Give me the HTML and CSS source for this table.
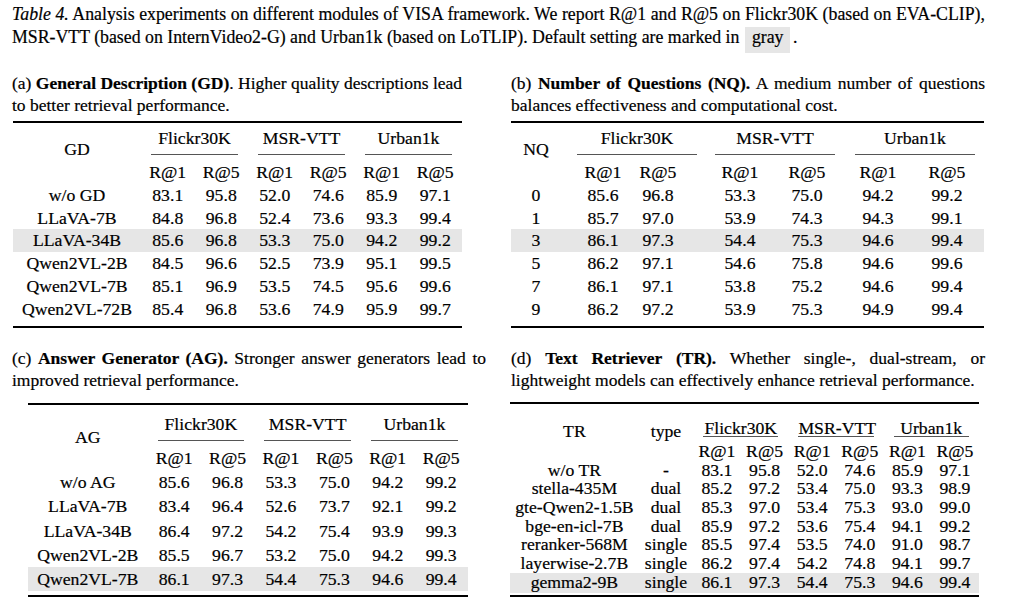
FILE: index.html
```html
<!DOCTYPE html>
<html lang="en">
<head>
<meta charset="utf-8">
<title>Table 4</title>
<link rel="stylesheet" href="styles.css">
</head>
<body>
<div class="page">
  <p class="caption">
    <span class="line just"><i>Table 4.</i> Analysis experiments on different modules of VISA framework. We report R@1 and R@5 on Flickr30K (based on EVA-CLIP),</span>
    <span class="line">MSR-VTT (based on InternVideo2-G) and Urban1k (based on LoTLIP). Default setting are marked in <span class="hl">gray</span>.</span>
  </p>

  <div class="figs">
    <section class="sub">
      <p class="subcap"><span class="line">(a) <b>General Description (GD)</b>. Higher quality descriptions lead</span><span class="line">to better retrieval performance.</span></p>
      <div class="tbl tbl-a">
        <div class="thead">
          <div class="lab">GD</div>
          <div class="grp"><span>Flickr30K</span></div>
          <div class="grp"><span>MSR-VTT</span></div>
          <div class="grp"><span>Urban1k</span></div>
          <div class="rh">R@1</div><div class="rh">R@5</div><div class="rh">R@1</div><div class="rh">R@5</div><div class="rh">R@1</div><div class="rh">R@5</div>
        </div>
        <div class="tr"><div>w/o GD</div><div>83.1</div><div>95.8</div><div>52.0</div><div>74.6</div><div>85.9</div><div>97.1</div></div>
        <div class="tr"><div>LLaVA-7B</div><div>84.8</div><div>96.8</div><div>52.4</div><div>73.6</div><div>93.3</div><div>99.4</div></div>
        <div class="tr def"><div>LLaVA-34B</div><div>85.6</div><div>96.8</div><div>53.3</div><div>75.0</div><div>94.2</div><div>99.2</div></div>
        <div class="tr"><div>Qwen2VL-2B</div><div>84.5</div><div>96.6</div><div>52.5</div><div>73.9</div><div>95.1</div><div>99.5</div></div>
        <div class="tr"><div>Qwen2VL-7B</div><div>85.1</div><div>96.9</div><div>53.5</div><div>74.5</div><div>95.6</div><div>99.6</div></div>
        <div class="tr"><div>Qwen2VL-72B</div><div>85.4</div><div>96.8</div><div>53.6</div><div>74.9</div><div>95.9</div><div>99.7</div></div>
      </div>
    </section>

    <section class="sub">
      <p class="subcap"><span class="line just">(b) <b>Number of Questions (NQ).</b> A medium number of questions</span><span class="line">balances effectiveness and computational cost.</span></p>
      <div class="tbl tbl-b">
        <div class="thead">
          <div class="lab">NQ</div>
          <div class="grp"><span>Flickr30K</span></div>
          <div class="grp"><span>MSR-VTT</span></div>
          <div class="grp"><span>Urban1k</span></div>
          <div class="rh">R@1</div><div class="rh">R@5</div><div class="rh">R@1</div><div class="rh">R@5</div><div class="rh">R@1</div><div class="rh">R@5</div>
        </div>
        <div class="tr"><div>0</div><div>85.6</div><div>96.8</div><div>53.3</div><div>75.0</div><div>94.2</div><div>99.2</div></div>
        <div class="tr"><div>1</div><div>85.7</div><div>97.0</div><div>53.9</div><div>74.3</div><div>94.3</div><div>99.1</div></div>
        <div class="tr def"><div>3</div><div>86.1</div><div>97.3</div><div>54.4</div><div>75.3</div><div>94.6</div><div>99.4</div></div>
        <div class="tr"><div>5</div><div>86.2</div><div>97.1</div><div>54.6</div><div>75.8</div><div>94.6</div><div>99.6</div></div>
        <div class="tr"><div>7</div><div>86.1</div><div>97.1</div><div>53.8</div><div>75.2</div><div>94.6</div><div>99.4</div></div>
        <div class="tr"><div>9</div><div>86.2</div><div>97.2</div><div>53.9</div><div>75.3</div><div>94.9</div><div>99.4</div></div>
      </div>
    </section>

    <section class="sub">
      <p class="subcap"><span class="line just">(c) <b>Answer Generator (AG).</b> Stronger answer generators lead to</span><span class="line">improved retrieval performance.</span></p>
      <div class="tbl tbl-c">
        <div class="thead">
          <div class="lab">AG</div>
          <div class="grp"><span>Flickr30K</span></div>
          <div class="grp"><span>MSR-VTT</span></div>
          <div class="grp"><span>Urban1k</span></div>
          <div class="rh">R@1</div><div class="rh">R@5</div><div class="rh">R@1</div><div class="rh">R@5</div><div class="rh">R@1</div><div class="rh">R@5</div>
        </div>
        <div class="tr"><div>w/o AG</div><div>85.6</div><div>96.8</div><div>53.3</div><div>75.0</div><div>94.2</div><div>99.2</div></div>
        <div class="tr"><div>LLaVA-7B</div><div>83.4</div><div>96.4</div><div>52.6</div><div>73.7</div><div>92.1</div><div>99.2</div></div>
        <div class="tr"><div>LLaVA-34B</div><div>86.4</div><div>97.2</div><div>54.2</div><div>75.4</div><div>93.9</div><div>99.3</div></div>
        <div class="tr"><div>Qwen2VL-2B</div><div>85.5</div><div>96.7</div><div>53.2</div><div>75.0</div><div>94.2</div><div>99.3</div></div>
        <div class="tr def"><div>Qwen2VL-7B</div><div>86.1</div><div>97.3</div><div>54.4</div><div>75.3</div><div>94.6</div><div>99.4</div></div>
      </div>
    </section>

    <section class="sub">
      <p class="subcap"><span class="line just">(d) <b>Text Retriever (TR).</b> Whether single-, dual-stream, or</span><span class="line">lightweight models can effectively enhance retrieval performance.</span></p>
      <div class="tbl tbl-d">
        <div class="thead">
          <div class="lab">TR</div>
          <div class="lab">type</div>
          <div class="grp"><span>Flickr30K</span></div>
          <div class="grp"><span>MSR-VTT</span></div>
          <div class="grp"><span>Urban1k</span></div>
          <div class="rh">R@1</div><div class="rh">R@5</div><div class="rh">R@1</div><div class="rh">R@5</div><div class="rh">R@1</div><div class="rh">R@5</div>
        </div>
        <div class="tr"><div>w/o TR</div><div>-</div><div>83.1</div><div>95.8</div><div>52.0</div><div>74.6</div><div>85.9</div><div>97.1</div></div>
        <div class="tr"><div>stella-435M</div><div>dual</div><div>85.2</div><div>97.2</div><div>53.4</div><div>75.0</div><div>93.3</div><div>98.9</div></div>
        <div class="tr"><div>gte-Qwen2-1.5B</div><div>dual</div><div>85.3</div><div>97.0</div><div>53.4</div><div>75.3</div><div>93.0</div><div>99.0</div></div>
        <div class="tr"><div>bge-en-icl-7B</div><div>dual</div><div>85.9</div><div>97.2</div><div>53.6</div><div>75.4</div><div>94.1</div><div>99.2</div></div>
        <div class="tr"><div>reranker-568M</div><div>single</div><div>85.5</div><div>97.4</div><div>53.5</div><div>74.0</div><div>91.0</div><div>98.7</div></div>
        <div class="tr"><div>layerwise-2.7B</div><div>single</div><div>86.2</div><div>97.4</div><div>54.2</div><div>74.8</div><div>94.1</div><div>99.7</div></div>
        <div class="tr def last"><div>gemma2-9B</div><div>single</div><div>86.1</div><div>97.3</div><div>54.4</div><div>75.3</div><div>94.6</div><div>99.4</div></div>
      </div>
    </section>
  </div>
</div>
</body>
</html>
```

FILE: styles.css
```css
html, body {
  margin: 0;
  background: #ffffff;
}

body {
  color: #000000;
  font-family: "Liberation Serif", "Times New Roman", serif;
  font-size: 17.5px;
  line-height: 1.3;
  -webkit-text-stroke: 0.2px #000;
}

.page {
  width: 973px;
  padding: 3px 0 0 12px;
}

.caption {
  margin: 0;
  font-size: 17.8px;
  line-height: 22.7px;
}

.line {
  display: block;
  white-space: nowrap;
}

.just {
  white-space: normal;
  text-align: justify;
  text-align-last: justify;
}

.hl {
  background: #e6e6e6;
  padding: 0 6.5px 6px;
  margin: 0 3px 0 1.5px;
}

.figs {
  display: grid;
  grid-template-columns: 474px 474px;
  column-gap: 25px;
  row-gap: 19px;
  margin-top: 23.6px;
}

.subcap {
  margin: 0;
  line-height: 22px;
}

/* ---------- tables ---------- */
.tbl {
  border-top: 2px solid #000;
  border-bottom: 2px solid #000;
  text-align: center;
  white-space: nowrap;
  font-size: 17.7px;
  padding-bottom: var(--pb);
}

.thead,
.tr {
  display: grid;
  grid-template-columns: var(--cols);
}

.thead {
  grid-template-rows: auto auto;
}

.lab {
  grid-row: span 2;
  align-self: center;
  padding-bottom: var(--labpb);
}

.grp {
  grid-column: span 2;
  padding-top: var(--gpt);
}

.grp > span {
  display: block;
  margin: 0 10px;
  line-height: var(--gl);
  padding-bottom: var(--gpb);
  border-bottom: 1px solid #555;
}

.rh {
  line-height: var(--row);
  margin-top: var(--rhm);
}

.tr {
  line-height: var(--row);
}

.tr.def {
  background: #e6e6e6;
}

/* (a) General Description */
.tbl-a {
  width: 449px;
  margin: 5px 0 0 1px;
  --cols: 128px repeat(6, 53.5px);
  --gpt: 4px;
  --gl: 23px;
  --gpb: 4px;
  --rhm: 6px;
  --row: 22.8px;
  --pb: 5.2px;
  --labpb: 7px;
}

/* (b) Number of Questions */
.tbl-b {
  width: 473px;
  margin: 5px 0 0 0;
  --cols: 50px 22px 40px 15px 40px 42px 40px 27px 40px 31px 40px 29px 40px 17px;
  --gpt: 4px;
  --gl: 23px;
  --gpb: 4px;
  --rhm: 6px;
  --row: 22.8px;
  --pb: 5.2px;
  --labpb: 7px;
}

.tbl-b .lab { grid-column: 1; grid-row: 1 / span 2; }
.tbl-b .grp { grid-row: 1; }
.tbl-b .grp:nth-child(2) { grid-column: 2 / 7; }
.tbl-b .grp:nth-child(2) > span { margin: 0 23px 0 16px; }
.tbl-b .grp:nth-child(3) { grid-column: 6 / 11; }
.tbl-b .grp:nth-child(3) > span { margin: 0 23px 0 37px; }
.tbl-b .grp:nth-child(4) { grid-column: 10 / 15; }
.tbl-b .grp:nth-child(4) > span { margin: 0 9px 0 28px; }
.tbl-b .rh { grid-row: 2; }
.tbl-b .rh:nth-child(5), .tbl-b .tr > :nth-child(2) { grid-column: 3; }
.tbl-b .rh:nth-child(6), .tbl-b .tr > :nth-child(3) { grid-column: 5; }
.tbl-b .rh:nth-child(7), .tbl-b .tr > :nth-child(4) { grid-column: 7; }
.tbl-b .rh:nth-child(8), .tbl-b .tr > :nth-child(5) { grid-column: 9; }
.tbl-b .rh:nth-child(9), .tbl-b .tr > :nth-child(6) { grid-column: 11; }
.tbl-b .rh:nth-child(10), .tbl-b .tr > :nth-child(7) { grid-column: 13; }

/* (c) Answer Generator */
.tbl-c {
  width: 440px;
  margin: 12px 0 0 16px;
  --cols: 119.5px repeat(6, 53.4px);
  --gpt: 8.5px;
  --gl: 23px;
  --gpb: 3.5px;
  --rhm: 4.85px;
  --row: 24.3px;
  --pb: 3.35px;
  --labpb: 0px;
}

/* (d) Text Retriever */
.tbl-d {
  width: 469px;
  margin: 11px 0 0 -1px;
  --cols: 128.8px 54.4px repeat(6, 47.6px);
  --gpt: 16px;
  --gl: 16px;
  --gpb: 0px;
  --rhm: 5.15px;
  --row: 18.7px;
  --pb: 1.75px;
  --labpb: 2px;
}

.tbl-d .tr.last {
  padding-bottom: 1.5px;
}
```
